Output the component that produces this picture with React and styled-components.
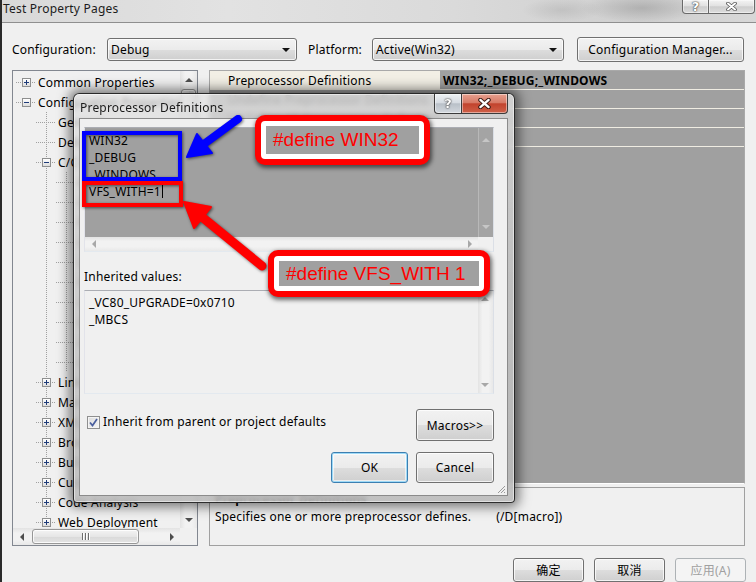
import styled, { createGlobalStyle } from "styled-components";

const GlobalStyle = createGlobalStyle`
  html, body {
    margin: 0;
    padding: 0;
    background: #f0f0f0;
  }
  body {
    font-family: "Noto Sans", "Liberation Sans", sans-serif;
    font-size: 12px;
    letter-spacing: 0.2px;
    color: #000;
  }
  * {
    box-sizing: border-box;
  }
`;

const Screen = styled.div`
  position: relative;
  width: 756px;
  height: 582px;
  overflow: hidden;
`;

const Window = styled.div`
  width: 756px;
  height: 582px;
  background: #f0f0f0;
  border-left: 2px solid #2a2a2a;
  display: flex;
  flex-direction: column;
`;

const TitleBar = styled.div`
  height: 23px;
  flex: none;
  display: flex;
  align-items: flex-start;
  justify-content: space-between;
  background:
    radial-gradient(ellipse 60px 14px at 640px 8px, rgba(120, 120, 120, 0.35), transparent),
    radial-gradient(ellipse 40px 12px at 560px 10px, rgba(140, 140, 140, 0.25), transparent),
    linear-gradient(90deg, #d9d9d9 0%, #e2e2e2 30%, #dadada 60%, #cfcfcf 85%, #d8d8d8 100%);
  border-bottom: 1px solid #8f8f8f;
`;

const TitleText = styled.span`
  padding: 1px 0 0 1px;
  line-height: 16px;
  color: #1c1c1c;
`;

const CaptionGroup = styled.div`
  display: flex;
  margin-right: ${(p) => p.$mr || 0}px;
`;

const CaptionButton = styled.div`
  width: ${(p) => p.$w}px;
  height: ${(p) => p.$h}px;
  display: flex;
  align-items: center;
  justify-content: center;
  border: 1px solid ${(p) => (p.$active ? "#3b3b3b" : "#6a6a6a")};
  border-top: none;
  background: ${(p) =>
    p.$close && p.$active
      ? "linear-gradient(#e7a08f 0%, #d77a66 45%, #c2432d 52%, #cf6048 100%)"
      : p.$active
      ? "linear-gradient(#eef1f4 0%, #d7dce2 45%, #b9c0c8 52%, #d3d8de 100%)"
      : "linear-gradient(rgba(255,255,255,0.7) 0%, rgba(235,235,235,0.6) 45%, rgba(200,200,200,0.6) 52%, rgba(225,225,225,0.7) 100%)"};
  box-shadow: inset 0 0 0 1px rgba(255, 255, 255, 0.45);
  color: #fff;
  font: bold 13px "DejaVu Sans", sans-serif;
  text-shadow: 0 0 2px #333, 0 0 1px #222;
  &:first-child {
    border-radius: 0 0 0 4px;
  }
  &:last-child {
    border-left: none;
    border-radius: 0 0 4px 0;
  }
`;

const Client = styled.div`
  flex: 1;
  display: flex;
  flex-direction: column;
  padding: 14px 11px 0 10px;
`;

const ConfigRow = styled.div`
  display: flex;
  align-items: center;
  height: 25px;
`;

const FieldLabel = styled.span`
  width: ${(p) => p.$w}px;
  margin-left: ${(p) => p.$ml || 0}px;
  line-height: 16px;
`;

const buttonFace = `
  border: 1px solid #707070;
  border-radius: 3px;
  background: linear-gradient(#f2f2f2 0%, #ebebeb 50%, #dddddd 51%, #cfcfcf 100%);
  box-shadow: inset 0 0 0 1px rgba(255, 255, 255, 0.75);
`;

const Combo = styled.div`
  width: ${(p) => p.$w}px;
  height: 23px;
  display: flex;
  align-items: center;
  justify-content: space-between;
  padding: 0 6px 0 3px;
  ${buttonFace}
`;

const DropArrow = styled.span`
  width: 0;
  height: 0;
  border-left: 4px solid transparent;
  border-right: 4px solid transparent;
  border-top: 4px solid #111;
`;

const Button = styled.div`
  width: ${(p) => p.$w}px;
  height: ${(p) => p.$h || 23}px;
  margin-left: ${(p) => p.$ml || 0}px;
  display: flex;
  align-items: center;
  justify-content: center;
  flex: none;
  color: ${(p) => (p.$disabled ? "#a0a0a0" : "#000")};
  font-family: "Noto Sans", "Liberation Sans", "Noto Sans CJK SC", sans-serif;
  ${buttonFace}
  ${(p) =>
    p.$disabled &&
    `border-color: #adb2b5; background: #f4f4f4; box-shadow: none;`}
  ${(p) =>
    p.$default &&
    `border-color: #3c7fb1; box-shadow: inset 0 0 0 1px #9fdaf7, inset 0 0 0 2px rgba(255,255,255,0.6);`}
`;

const Main = styled.div`
  display: flex;
  gap: 11px;
  height: 476px;
  margin-top: 8px;
`;

/* ---------- tree ---------- */

const TreePanel = styled.div`
  width: 186px;
  flex: none;
  border: 1px solid #828790;
  background: #f0f0f0;
  display: flex;
  flex-direction: column;
`;

const TreeTop = styled.div`
  flex: 1;
  display: flex;
  min-height: 0;
`;

const TreeBody = styled.div`
  flex: 1;
  overflow: hidden;
  padding: 1px 0 0 3px;
`;

const TreeRow = styled.div`
  height: 20px;
  display: flex;
  align-items: center;
  white-space: nowrap;
`;

const dots = "#a0a0a0";

const Guide = styled.div`
  width: 20px;
  height: 20px;
  flex: none;
  ${(p) =>
    p.$line &&
    `background-image: linear-gradient(${dots} 50%, transparent 50%);
     background-size: 1px 2px;
     background-repeat: repeat-y;
     background-position: 10px 0;`}
`;

const Branch = styled.div`
  width: 20px;
  height: 20px;
  flex: none;
  display: flex;
  align-items: center;
  justify-content: center;
  background-image: linear-gradient(90deg, ${dots} 50%, transparent 50%)
    ${(p) =>
      p.$pos === "root"
        ? ""
        : `, linear-gradient(${dots} 50%, transparent 50%)`};
  background-size: 2px 1px ${(p) => (p.$pos === "root" ? "" : ", 1px 2px")};
  background-repeat: repeat-x ${(p) => (p.$pos === "root" ? "" : ", repeat-y")};
  background-position: 10px 10px
    ${(p) =>
      p.$pos === "root"
        ? ""
        : p.$pos === "first"
        ? ", 10px 10px"
        : p.$pos === "last"
        ? ", 10px -10px"
        : ", 10px 0"};
  clip-path: inset(0 0 0 0);
`;

const Expander = styled.span`
  position: relative;
  width: 9px;
  height: 9px;
  border: 1px solid #8e8f8f;
  background: linear-gradient(#ffffff, #dcdcdc);
  display: flex;
  align-items: center;
  justify-content: center;
  &::before {
    content: "";
    width: 5px;
    height: 1px;
    background: #1d3a78;
  }
  ${(p) =>
    p.$open
      ? ""
      : `&::after {
    content: "";
    position: absolute;
    width: 1px;
    height: 5px;
    background: #1d3a78;
  }`}
`;

const TreeLabel = styled.span`
  padding: 1px 0 0 2px;
  line-height: 16px;
`;

/* ---------- scrollbars ---------- */

const ScrollBar = styled.div`
  flex: ${(p) => (p.$grow ? 1 : "none")};
  display: flex;
  flex-direction: ${(p) => (p.$vertical ? "column" : "row")};
  ${(p) => (p.$vertical ? `width: ${p.$size || 17}px;` : `height: ${p.$size || 17}px;`)}
  background: ${(p) =>
    p.$gray
      ? "#a4a4a4"
      : p.$vertical
      ? "linear-gradient(90deg, #e3e3e3, #f2f2f2 30%, #f2f2f2 70%, #e8e8e8)"
      : "linear-gradient(#e3e3e3, #f2f2f2 30%, #f2f2f2 70%, #e8e8e8)"};
  ${(p) => p.$gray && "border-left: 1px solid #b8b8b8;"}
`;

const arrowShapes = {
  up: (c) => `border-left: 4px solid transparent; border-right: 4px solid transparent; border-bottom: 4px solid ${c};`,
  down: (c) => `border-left: 4px solid transparent; border-right: 4px solid transparent; border-top: 4px solid ${c};`,
  left: (c) => `border-top: 4px solid transparent; border-bottom: 4px solid transparent; border-right: 4px solid ${c};`,
  right: (c) => `border-top: 4px solid transparent; border-bottom: 4px solid transparent; border-left: 4px solid ${c};`,
};

const ScrollArrow = styled.div`
  flex: none;
  width: ${(p) => p.$w || 17}px;
  height: ${(p) => p.$h || 17}px;
  display: flex;
  align-items: center;
  justify-content: center;
  &::before {
    content: "";
    width: 0;
    height: 0;
    ${(p) => arrowShapes[p.$dir](p.$color || "#4f4f4f")}
  }
`;

const ScrollSpace = styled.div`
  flex: 1;
`;

const Thumb = styled.div`
  flex: none;
  ${(p) =>
    p.$vertical
      ? `height: ${p.$len}px; margin: 1px 1px;`
      : `width: ${p.$len}px; margin: 1px 1px 1px ${p.$start || 1}px;`}
  border: 1px solid #979797;
  border-radius: 3px;
  background: ${(p) =>
    p.$vertical
      ? "linear-gradient(90deg, #f3f3f3, #e6e6e6 50%, #d9d9d9 51%, #e4e4e4)"
      : "linear-gradient(#f3f3f3, #e6e6e6 50%, #d9d9d9 51%, #e4e4e4)"};
  box-shadow: inset 0 0 0 1px rgba(255, 255, 255, 0.8);
  display: flex;
  align-items: center;
  justify-content: center;
  gap: 2px;
`;

const GripLine = styled.span`
  width: 1px;
  height: 7px;
  background: #6e6e6e;
  box-shadow: 1px 0 0 #fff;
`;

const Corner = styled.div`
  width: ${(p) => p.$w || 17}px;
  flex: none;
  background: #f0f0f0;
`;

/* ---------- property grid ---------- */

const RightPanel = styled.div`
  flex: 1;
  display: flex;
  flex-direction: column;
`;

const Grid = styled.div`
  flex: 1;
  border: 1px solid #a9a9a9;
  border-bottom-color: #ffffff;
  background: #a0a0a0;
  overflow: hidden;
`;

const PropRow = styled.div`
  display: grid;
  grid-template-columns: 230px 1fr;
  height: 19px;
  border-bottom: 1px solid #efece2;
`;

const PropName = styled.div`
  padding: 1px 0 0 18px;
  line-height: 17px;
  white-space: nowrap;
  overflow: hidden;
  background: ${(p) => (p.$selected ? "#f2efe5" : "transparent")};
  color: ${(p) => (p.$selected ? "#000" : "#2c2c2c")};
`;

const PropValue = styled.div`
  padding: 1px 0 0 3px;
  line-height: 17px;
  font-weight: ${(p) => (p.$bold ? 700 : 400)};
  white-space: nowrap;
`;

const Description = styled.div`
  height: 59px;
  margin-top: 3px;
  border: 1px solid #a0a0a0;
  padding: 3px 5px;
`;

const DescTitle = styled.div`
  font-weight: 700;
  line-height: 16px;
`;

const DescText = styled.div`
  display: flex;
  gap: 25px;
  margin-top: 2px;
  line-height: 16px;
`;

const Footer = styled.div`
  display: flex;
  justify-content: flex-end;
  gap: 10px;
  margin-top: 12px;
  margin-right: -1px;
`;

/* ---------- dialog ---------- */

const Dialog = styled.div`
  position: absolute;
  left: 73px;
  top: 93px;
  width: 442px;
  height: 410px;
  display: flex;
  flex-direction: column;
  padding: 0 6px 6px 5px;
  border: 1px solid rgba(25, 25, 25, 0.9);
  border-radius: 6px 6px 4px 4px;
  background: linear-gradient(180deg, rgba(226, 226, 226, 0.72), rgba(200, 200, 200, 0.82) 40%, rgba(185, 185, 185, 0.85));
  backdrop-filter: blur(2.5px);
  box-shadow: 0 0 12px 4px rgba(0, 0, 0, 0.5), inset 0 0 0 1px rgba(255, 255, 255, 0.5);
`;

const DialogTitle = styled.div`
  height: 24px;
  flex: none;
  display: flex;
  align-items: flex-start;
  justify-content: space-between;
`;

const DialogTitleText = styled.span`
  padding: 6px 0 0 1px;
  line-height: 16px;
  color: #1a1a1a;
`;

const DialogClient = styled.div`
  position: relative;
  flex: 1;
  display: flex;
  flex-direction: column;
  padding: 8px 13px 0 4px;
  background: #f0f0f0;
  border: 1px solid #8b8b8b;
`;

const EditBox = styled.div`
  height: ${(p) => p.$h}px;
  flex: none;
  display: flex;
  flex-direction: column;
  border: 1px solid #abadb3;
  border-color: #abadb3 #dbdfe6 #e3e9ef #e2e3ea;
  margin-top: ${(p) => p.$mt || 0}px;
`;

const EditTop = styled.div`
  flex: 1;
  display: flex;
  min-height: 0;
`;

const EditBottom = styled.div`
  height: 14px;
  flex: none;
  display: flex;
`;

const EditText = styled.div`
  flex: 1;
  padding: ${(p) => p.$pt}px 4px 0;
  line-height: 17px;
  background: ${(p) => (p.$gray ? "#a0a0a0" : "#f0f0f0")};
  white-space: pre;
`;

const Caret = styled.span`
  display: inline-block;
  width: 1px;
  height: 14px;
  margin-left: 1px;
  vertical-align: -2px;
  background: #000;
`;

const SectionLabel = styled.div`
  margin-top: 17px;
  line-height: 16px;
`;

const OptionsRow = styled.div`
  display: flex;
  justify-content: space-between;
  align-items: flex-start;
  margin-top: 15px;
`;

const CheckRow = styled.label`
  display: flex;
  align-items: center;
  gap: 3px;
  padding: 5px 0 0 3px;
  line-height: 16px;
`;

const CheckBox = styled.span`
  width: 13px;
  height: 13px;
  border: 1px solid #8f8f8f;
  background: linear-gradient(135deg, #dcdcdc, #f6f6f6);
  box-shadow: inset 0 0 0 1px #f4f4f4;
  display: flex;
  align-items: center;
  justify-content: center;
`;

const ButtonRow = styled.div`
  display: flex;
  justify-content: flex-end;
  gap: 8px;
  margin-top: 11px;
`;

const Grip = styled.svg`
  position: absolute;
  right: 1px;
  bottom: 1px;
`;

/* ---------- annotations ---------- */

const Overlay = styled.svg`
  position: absolute;
  left: 0;
  top: 0;
  pointer-events: none;
`;

const Callout = styled.div`
  position: absolute;
  left: ${(p) => p.$x}px;
  top: ${(p) => p.$y}px;
  width: ${(p) => p.$w}px;
  height: ${(p) => p.$h}px;
  border: 6px solid #ff0000;
  border-radius: 10px;
  padding: 5px;
  background: #ffffff;
  box-shadow: 1px 2px 4px 1px rgba(0, 0, 0, 0.55);
`;

const CalloutText = styled.div`
  height: 100%;
  display: flex;
  align-items: center;
  padding-left: 7px;
  background: #a0a0a0;
  color: #ff0000;
  font: 19px "Liberation Sans", sans-serif;
  letter-spacing: 0;
  white-space: nowrap;
`;

const ccpp = [
  "General",
  "Optimization",
  "Preprocessor",
  "Code Generation",
  "Language",
  "Precompiled Headers",
  "Output Files",
  "Browse Information",
  "Advanced",
  "Command Line",
];

const lower = [
  "Linker",
  "Manifest Tool",
  "XML Document Generator",
  "Browse Information",
  "Build Events",
  "Custom Build Step",
  "Code Analysis",
  "Web Deployment",
];

const treeItems = [
  { label: "Common Properties", guides: [], pos: "root", exp: "plus" },
  { label: "Configuration Properties", guides: [], pos: "root", exp: "minus" },
  { label: "General", guides: [false], pos: "first" },
  { label: "Debugging", guides: [false], pos: "mid" },
  { label: "C/C++", guides: [false], pos: "mid", exp: "minus" },
  ...ccpp.map((label, i) => ({
    label,
    guides: [false, true],
    pos: i === ccpp.length - 1 ? "last" : "mid",
  })),
  ...lower.map((label) => ({ label, guides: [false], pos: "mid", exp: "plus" })),
];

const props = [
  { name: "Preprocessor Definitions", value: "WIN32;_DEBUG;_WINDOWS", selected: true },
  { name: "Undefine Preprocessor Definitions", value: "" },
  { name: "Undefine All Preprocessor Definitions", value: "" },
  { name: "Ignore Standard Include Paths", value: "" },
];

function CloseGlyph({ size = 11, active }) {
  return (
    <svg width={size} height={size - 2} viewBox="0 0 11 9">
      <path d="M2 1.5 L9 7.5 M9 1.5 L2 7.5" stroke={active ? "#3a1a14" : "#555"} strokeWidth="3.6" strokeLinecap="round" />
      <path d="M2 1.5 L9 7.5 M9 1.5 L2 7.5" stroke="#fff" strokeWidth="2" strokeLinecap="round" />
    </svg>
  );
}

function Arrow({ tail, tip, c1, c2, base, color, width }) {
  return (
    <g>
      <line x1={tail[0]} y1={tail[1]} x2={base[0]} y2={base[1]} stroke={color} strokeWidth={width} strokeLinecap="round" />
      <polygon points={`${tip.join(",")} ${c1.join(",")} ${c2.join(",")}`} fill={color} stroke={color} strokeWidth="2" strokeLinejoin="round" />
    </g>
  );
}

export default function App() {
  return (
    <Screen>
      <GlobalStyle />
      <Window>
        <TitleBar>
          <TitleText>Test Property Pages</TitleText>
          <CaptionGroup $mr={1}>
            <CaptionButton $w={27} $h={14}>?</CaptionButton>
            <CaptionButton $w={46} $h={14} $close>
              <CloseGlyph />
            </CaptionButton>
          </CaptionGroup>
        </TitleBar>

        <Client>
          <ConfigRow>
            <FieldLabel $w={95}>Configuration:</FieldLabel>
            <Combo $w={190}>
              <span>Debug</span>
              <DropArrow />
            </Combo>
            <FieldLabel $w={64} $ml={11}>Platform:</FieldLabel>
            <Combo $w={192}>
              <span>Active(Win32)</span>
              <DropArrow />
            </Combo>
            <Button $w={167} $h={25} $ml={13}>Configuration Manager...</Button>
          </ConfigRow>

          <Main>
            <TreePanel>
              <TreeTop>
                <TreeBody>
                  {treeItems.map((item, i) => (
                    <TreeRow key={i}>
                      {item.guides.map((g, j) => (
                        <Guide key={j} $line={g} />
                      ))}
                      <Branch $pos={item.pos}>
                        {item.exp && <Expander $open={item.exp === "minus"} />}
                      </Branch>
                      <TreeLabel>{item.label}</TreeLabel>
                    </TreeRow>
                  ))}
                </TreeBody>
                <ScrollBar $vertical>
                  <ScrollArrow $dir="up" />
                  <Thumb $vertical $len={300} />
                  <ScrollSpace />
                  <ScrollArrow $dir="down" />
                </ScrollBar>
              </TreeTop>
              <ScrollBar>
                <ScrollArrow $dir="left" />
                <Thumb $len={107} $start={2}>
                  <GripLine />
                  <GripLine />
                  <GripLine />
                </Thumb>
                <ScrollSpace />
                <ScrollArrow $dir="right" />
                <Corner />
              </ScrollBar>
            </TreePanel>

            <RightPanel>
              <Grid>
                {props.map((p) => (
                  <PropRow key={p.name}>
                    <PropName $selected={p.selected}>{p.name}</PropName>
                    <PropValue $bold={p.selected}>{p.value}</PropValue>
                  </PropRow>
                ))}
              </Grid>
              <Description>
                <DescTitle>Preprocessor Definitions</DescTitle>
                <DescText>
                  <span>Specifies one or more preprocessor defines.</span>
                  <span>(/D[macro])</span>
                </DescText>
              </Description>
            </RightPanel>
          </Main>

          <Footer>
            <Button $w={71} $h={24}>确定</Button>
            <Button $w={71} $h={24}>取消</Button>
            <Button $w={71} $h={24} $disabled>应用(A)</Button>
          </Footer>
        </Client>
      </Window>

      <Dialog>
        <DialogTitle>
          <DialogTitleText>Preprocessor Definitions</DialogTitleText>
          <CaptionGroup>
            <CaptionButton $w={28} $h={20} $active>?</CaptionButton>
            <CaptionButton $w={46} $h={20} $active $close>
              <CloseGlyph size={13} active />
            </CaptionButton>
          </CaptionGroup>
        </DialogTitle>
        <DialogClient>
          <EditBox $h={125}>
            <EditTop>
              <EditText $gray $pt={4}>
                {"WIN32\n_DEBUG\n_WINDOWS\nVFS_WITH=1"}
                <Caret />
              </EditText>
              <ScrollBar $vertical $size={15} $gray>
                <ScrollArrow $dir="up" $w={14} $h={24} $color="#c6c6c6" />
                <ScrollSpace />
                <ScrollArrow $dir="down" $w={14} $h={20} $color="#c6c6c6" />
              </ScrollBar>
            </EditTop>
            <EditBottom>
              <ScrollBar $size={14} $grow>
                <ScrollArrow $dir="left" $w={17} $h={14} $color="#a8a8a8" />
                <ScrollSpace />
                <ScrollArrow $dir="right" $w={17} $h={14} $color="#a8a8a8" />
              </ScrollBar>
              <Corner $w={15} />
            </EditBottom>
          </EditBox>

          <SectionLabel>Inherited values:</SectionLabel>

          <EditBox $h={104} $mt={5}>
            <EditTop>
              <EditText $pt={3}>{"_VC80_UPGRADE=0x0710\n_MBCS"}</EditText>
              <ScrollBar $vertical $size={15}>
                <ScrollArrow $dir="up" $w={14} $h={16} $color="#a8a8a8" />
                <ScrollSpace />
                <ScrollArrow $dir="down" $w={14} $h={16} $color="#a8a8a8" />
              </ScrollBar>
            </EditTop>
          </EditBox>

          <OptionsRow>
            <CheckRow>
              <CheckBox>
                <svg width="9" height="9" viewBox="0 0 9 9">
                  <path d="M1 4.5 L3.5 7.5 L8 1" fill="none" stroke="#4a5f9e" strokeWidth="1.7" />
                </svg>
              </CheckBox>
              Inherit from parent or project defaults
            </CheckRow>
            <Button $w={78} $h={32}>Macros&gt;&gt;</Button>
          </OptionsRow>

          <ButtonRow>
            <Button $w={77} $h={31} $default>OK</Button>
            <Button $w={78} $h={31}>Cancel</Button>
          </ButtonRow>

          <Grip width="9" height="9" viewBox="0 0 9 9">
            <path d="M8 1 L1 8 M8 4 L4 8 M8 7 L7 8" stroke="#9a9a9a" strokeWidth="1" />
          </Grip>
        </DialogClient>
      </Dialog>

      <Overlay width="756" height="582" viewBox="0 0 756 582">
        <g style={{ filter: "drop-shadow(1px 1px 1.5px rgba(0,0,0,0.55))" }}>
          <rect x="84" y="133" width="96" height="46" fill="none" stroke="#0000ff" strokeWidth="4" />
          <rect x="84" y="183" width="97" height="22" fill="none" stroke="#ff0000" strokeWidth="4" />
          <Arrow
            tail={[238, 119]}
            base={[204, 144]}
            tip={[187, 157]}
            c1={[197, 134]}
            c2={[212, 153]}
            color="#0000ff"
            width={8}
          />
          <Arrow
            tail={[262, 266]}
            base={[202, 217]}
            tip={[184, 202]}
            c1={[211, 207]}
            c2={[194, 228]}
            color="#ff0000"
            width={9}
          />
        </g>
      </Overlay>

      <Callout $x={255} $y={115} $w={175} $h={50}>
        <CalloutText>#define WIN32</CalloutText>
      </Callout>
      <Callout $x={268} $y={250} $w={222} $h={47}>
        <CalloutText>#define VFS_WITH 1</CalloutText>
      </Callout>
    </Screen>
  );
}
